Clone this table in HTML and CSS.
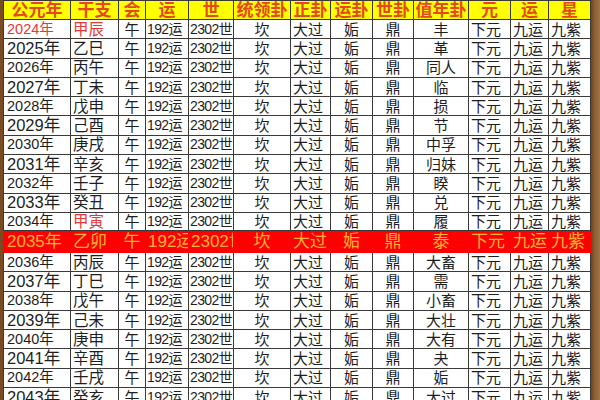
FILE: index.html
```html
<!DOCTYPE html>
<html lang="zh">
<head>
<meta charset="utf-8">
<link rel="stylesheet" href="styles.css">
</head>
<body>
<div class="frame">
  <div class="edge-left"></div>
  <table class="grid">
    <colgroup>
      <col class="c1"><col class="c2"><col class="c3"><col class="c4"><col class="c5"><col class="c6"><col class="c7"><col class="c8"><col class="c9"><col class="c10"><col class="c11"><col class="c12"><col class="c13">
    </colgroup>
    <thead>
      <tr class="head">
        <th>公元年</th><th>干支</th><th>会</th><th>运</th><th>世</th><th>统领卦</th><th>正卦</th><th>运卦</th><th>世卦</th><th>值年卦</th><th>元</th><th>运</th><th>星</th>
      </tr>
    </thead>
    <tbody>
      <tr class="row cur"><td class="yr sm">2024年</td><td class="gz">甲辰</td><td class="ct">午</td><td class="num">192运</td><td class="num">2302世</td><td class="ct">坎</td><td>大过</td><td class="ct">姤</td><td class="ct">鼎</td><td class="ct">丰</td><td>下元</td><td>九运</td><td>九紫</td></tr>
      <tr class="row"><td class="yr">2025年</td><td class="gz">乙巳</td><td class="ct">午</td><td class="num">192运</td><td class="num">2302世</td><td class="ct">坎</td><td>大过</td><td class="ct">姤</td><td class="ct">鼎</td><td class="ct">革</td><td>下元</td><td>九运</td><td>九紫</td></tr>
      <tr class="row"><td class="yr sm">2026年</td><td class="gz">丙午</td><td class="ct">午</td><td class="num">192运</td><td class="num">2302世</td><td class="ct">坎</td><td>大过</td><td class="ct">姤</td><td class="ct">鼎</td><td class="ct">同人</td><td>下元</td><td>九运</td><td>九紫</td></tr>
      <tr class="row"><td class="yr">2027年</td><td class="gz">丁未</td><td class="ct">午</td><td class="num">192运</td><td class="num">2302世</td><td class="ct">坎</td><td>大过</td><td class="ct">姤</td><td class="ct">鼎</td><td class="ct">临</td><td>下元</td><td>九运</td><td>九紫</td></tr>
      <tr class="row"><td class="yr sm">2028年</td><td class="gz">戊申</td><td class="ct">午</td><td class="num">192运</td><td class="num">2302世</td><td class="ct">坎</td><td>大过</td><td class="ct">姤</td><td class="ct">鼎</td><td class="ct">损</td><td>下元</td><td>九运</td><td>九紫</td></tr>
      <tr class="row"><td class="yr">2029年</td><td class="gz">己酉</td><td class="ct">午</td><td class="num">192运</td><td class="num">2302世</td><td class="ct">坎</td><td>大过</td><td class="ct">姤</td><td class="ct">鼎</td><td class="ct">节</td><td>下元</td><td>九运</td><td>九紫</td></tr>
      <tr class="row"><td class="yr sm">2030年</td><td class="gz">庚戌</td><td class="ct">午</td><td class="num">192运</td><td class="num">2302世</td><td class="ct">坎</td><td>大过</td><td class="ct">姤</td><td class="ct">鼎</td><td class="ct">中孚</td><td>下元</td><td>九运</td><td>九紫</td></tr>
      <tr class="row"><td class="yr">2031年</td><td class="gz">辛亥</td><td class="ct">午</td><td class="num">192运</td><td class="num">2302世</td><td class="ct">坎</td><td>大过</td><td class="ct">姤</td><td class="ct">鼎</td><td class="ct">归妹</td><td>下元</td><td>九运</td><td>九紫</td></tr>
      <tr class="row"><td class="yr sm">2032年</td><td class="gz">壬子</td><td class="ct">午</td><td class="num">192运</td><td class="num">2302世</td><td class="ct">坎</td><td>大过</td><td class="ct">姤</td><td class="ct">鼎</td><td class="ct">睽</td><td>下元</td><td>九运</td><td>九紫</td></tr>
      <tr class="row"><td class="yr">2033年</td><td class="gz">癸丑</td><td class="ct">午</td><td class="num">192运</td><td class="num">2302世</td><td class="ct">坎</td><td>大过</td><td class="ct">姤</td><td class="ct">鼎</td><td class="ct">兑</td><td>下元</td><td>九运</td><td>九紫</td></tr>
      <tr class="row short"><td class="yr sm">2034年</td><td class="gz mark">甲寅</td><td class="ct">午</td><td class="num">192运</td><td class="num">2302世</td><td class="ct">坎</td><td>大过</td><td class="ct">姤</td><td class="ct">鼎</td><td class="ct">履</td><td>下元</td><td>九运</td><td>九紫</td></tr>
      <tr class="row hot"><td class="yr">2035年</td><td class="gz">乙卯</td><td class="ct">午</td><td>192运</td><td>2302世</td><td class="ct">坎</td><td>大过</td><td class="ct">姤</td><td class="ct">鼎</td><td class="ct">泰</td><td>下元</td><td>九运</td><td>九紫</td></tr>
      <tr class="row"><td class="yr sm">2036年</td><td class="gz">丙辰</td><td class="ct">午</td><td class="num">192运</td><td class="num">2302世</td><td class="ct">坎</td><td>大过</td><td class="ct">姤</td><td class="ct">鼎</td><td class="ct">大畜</td><td>下元</td><td>九运</td><td>九紫</td></tr>
      <tr class="row"><td class="yr">2037年</td><td class="gz">丁巳</td><td class="ct">午</td><td class="num">192运</td><td class="num">2302世</td><td class="ct">坎</td><td>大过</td><td class="ct">姤</td><td class="ct">鼎</td><td class="ct">需</td><td>下元</td><td>九运</td><td>九紫</td></tr>
      <tr class="row"><td class="yr sm">2038年</td><td class="gz">戊午</td><td class="ct">午</td><td class="num">192运</td><td class="num">2302世</td><td class="ct">坎</td><td>大过</td><td class="ct">姤</td><td class="ct">鼎</td><td class="ct">小畜</td><td>下元</td><td>九运</td><td>九紫</td></tr>
      <tr class="row"><td class="yr">2039年</td><td class="gz">己未</td><td class="ct">午</td><td class="num">192运</td><td class="num">2302世</td><td class="ct">坎</td><td>大过</td><td class="ct">姤</td><td class="ct">鼎</td><td class="ct">大壮</td><td>下元</td><td>九运</td><td>九紫</td></tr>
      <tr class="row"><td class="yr sm">2040年</td><td class="gz">庚申</td><td class="ct">午</td><td class="num">192运</td><td class="num">2302世</td><td class="ct">坎</td><td>大过</td><td class="ct">姤</td><td class="ct">鼎</td><td class="ct">大有</td><td>下元</td><td>九运</td><td>九紫</td></tr>
      <tr class="row"><td class="yr">2041年</td><td class="gz">辛酉</td><td class="ct">午</td><td class="num">192运</td><td class="num">2302世</td><td class="ct">坎</td><td>大过</td><td class="ct">姤</td><td class="ct">鼎</td><td class="ct">夬</td><td>下元</td><td>九运</td><td>九紫</td></tr>
      <tr class="row"><td class="yr sm">2042年</td><td class="gz">壬戌</td><td class="ct">午</td><td class="num">192运</td><td class="num">2302世</td><td class="ct">坎</td><td>大过</td><td class="ct">姤</td><td class="ct">鼎</td><td class="ct">姤</td><td>下元</td><td>九运</td><td>九紫</td></tr>
      <tr class="row"><td class="yr">2043年</td><td class="gz">癸亥</td><td class="ct">午</td><td class="num">192运</td><td class="num">2302世</td><td class="ct">坎</td><td>大过</td><td class="ct">姤</td><td class="ct">鼎</td><td class="ct">大过</td><td>下元</td><td>九运</td><td>九紫</td></tr>
    </tbody>
  </table>
  <div class="edge-right"></div>
</div>
</body>
</html>
```
FILE: styles.css
```css
html, body {
  margin: 0;
  padding: 0;
  background: #ffffff;
}
body {
  width: 600px;
  height: 400px;
  overflow: hidden;
  font-family: "Liberation Sans", "Noto Sans CJK SC", sans-serif;
  color: #1e1e1e;
}
.frame {
  display: flex;
  width: 600px;
  height: 400px;
  overflow: hidden;
  align-items: flex-start;
}
.edge-left {
  flex: 0 0 3px;
  height: 400px;
  background: #7a4a22;
}
.edge-right {
  flex: 0 0 10px;
  height: 400px;
  background: linear-gradient(to right, #6e4220 0, #8a5a30 3px, #a77a4e 100%);
}
.grid {
  flex: 0 0 587px;
  width: 587px;
  table-layout: fixed;
  border-collapse: collapse;
}
.c1 { width: 67px; }
.c2 { width: 48px; }
.c3 { width: 27px; }
.c4 { width: 43px; }
.c5 { width: 45px; }
.c6 { width: 57px; }
.c7 { width: 40px; }
.c8 { width: 42px; }
.c9 { width: 41px; }
.c10 { width: 55px; }
.c11 { width: 42px; }
.c12 { width: 38px; }
.c13 { width: 42px; }

.grid th, .grid td {
  border: 1px solid #3a3a3a;
  padding: 0 0 0 2px;
  white-space: nowrap;
  overflow: hidden;
  text-align: left;
  line-height: 17px;
}
.head th {
  height: 18px;
  background: #ffff00;
  color: #e5481a;
  font-weight: bold;
  font-size: 17px;
  text-align: center;
  padding: 0;
}
.row td {
  height: 18.3px;
  font-size: 15px;
}
.row.short td {
  height: 16.5px;
}
.row td.ct {
  text-align: center;
  padding: 0;
}
.row td.num {
  font-size: 14px;
  letter-spacing: -0.6px;
  padding-left: 1px;
}
.row td.yr {
  font-size: 16.5px;
  padding-left: 3px;
}
.row td.yr.sm {
  font-size: 14.5px;
}
.row td.gz {
  font-size: 15.5px;
}
.row.cur td.yr,
.row.cur td.gz,
.row td.mark {
  color: #e3393a;
}
.row.hot td {
  height: 21px;
  background: #ff0000;
  color: #ffb52e;
  font-size: 17px;
  border-color: #ff0000;
}
.row.hot td.yr {
  font-size: 17px;
}
```
